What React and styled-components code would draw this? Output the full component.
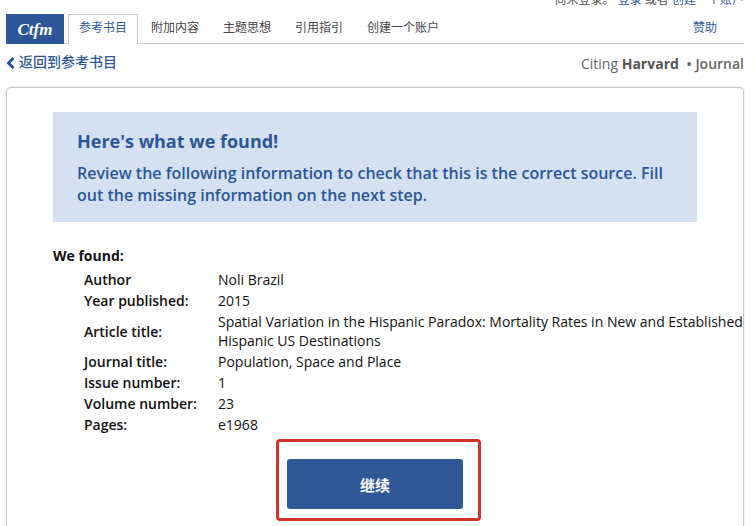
import React from 'react'
import styled, { createGlobalStyle } from 'styled-components'

const GlobalStyle = createGlobalStyle`
  * {
    box-sizing: border-box;
  }

  body {
    margin: 0;
    background: #fff;
    color: #111;
    font-family: "Open Sans", "Noto Sans CJK SC", sans-serif;
    font-size: 14px;
    line-height: 19px;
  }
`

const Page = styled.div`
  display: flex;
  flex-direction: column;
  min-height: 100vh;
  padding: 0 10px 0 6px;
`

const Account = styled.div`
  display: flex;
  align-items: flex-end;
  justify-content: flex-end;
  height: 6px;
  margin-bottom: 8px;
  overflow: hidden;
  color: #555;
  font-size: 12px;
  line-height: 12px;
  white-space: nowrap;
`

const TextLink = styled.a`
  color: #2e5a97;
  text-decoration: none;
`

const Nav = styled.nav`
  display: flex;
  height: 30px;
  border-bottom: 1px solid #c8c8c8;
  font-size: 12px;
`

const Logo = styled.a`
  display: flex;
  align-items: center;
  justify-content: center;
  width: 58px;
  height: 30px;
  margin-right: 4px;
  background: #2c5697;
  color: #fff;
  font-family: "Liberation Serif", serif;
  font-size: 17px;
  font-style: italic;
  font-weight: 700;
  text-decoration: none;
`

const Tab = styled.a`
  height: 30px;
  padding: 0 10px;
  border: 1px solid ${props => (props.$active ? '#c8c8c8' : 'transparent')};
  border-bottom: 0;
  background: ${props => (props.$active ? '#fff' : 'transparent')};
  color: ${props => (props.$blue ? '#2e5a97' : '#444')};
  line-height: 26px;
  margin-right: 2px;
  text-decoration: none;
`

const SponsorTab = styled(Tab)`
  margin-left: auto;
  margin-right: 16px;
`

const SubHeader = styled.div`
  display: flex;
  justify-content: space-between;
  height: 43px;
  padding-top: 8px;
`

const BackLink = styled(TextLink)`
  display: flex;
  gap: 4px;
  font-weight: 500;

  svg {
    margin-top: 5px;
  }
`

const Citing = styled.div`
  padding-top: 2px;
  color: #666;

  strong {
    margin-right: 4px;
    color: #555;
  }

  span {
    font-weight: 600;
  }
`

const Card = styled.main`
  flex: 1;
  padding: 24px 0 16px 46px;
  border: 1px solid #c8c8c8;
  border-bottom: 0;
  border-radius: 5px 5px 0 0;
  box-shadow: 0 0 3px #ddd;
`

const Notice = styled.section`
  margin-right: 46px;
  padding: 18px 24px 16px;
  background: #d5e0f1;
  color: #2c5697;
`

const NoticeTitle = styled.h1`
  margin: 0 0 10px;
  font-size: 18px;
  font-weight: 700;
  line-height: 22px;
`

const NoticeText = styled.p`
  margin: 0;
  font-size: 16px;
  font-weight: 600;
  line-height: 22px;
`

const FoundTitle = styled.h2`
  margin: 24px 0 3px;
  font-size: 14px;
  font-weight: 700;
  line-height: 19px;
`

const Details = styled.table`
  width: calc(100% - 27px);
  margin-left: 29px;
  border-spacing: 2px;

  th,
  td {
    padding: 0;
    text-align: left;
  }

  th {
    width: 132px;
    font-weight: 600;
  }
`

const Actions = styled.div`
  display: flex;
  justify-content: center;
  margin: 23px 46px 0 0;
`

const Highlight = styled.div`
  position: relative;

  &::after {
    content: '';
    position: absolute;
    inset: -20px -18px -12px -11px;
    border: 3px solid #d2322a;
    border-radius: 4px;
    pointer-events: none;
  }
`

const Button = styled.button`
  width: 176px;
  height: 50px;
  border: 0;
  border-radius: 3px;
  background: #2f5897;
  color: #fff;
  font-family: inherit;
  font-size: 15px;
  font-weight: 700;
`

const tabs = ['附加内容', '主题思想', '引用指引', '创建一个账户']

const details = [
  ['Author', 'Noli Brazil'],
  ['Year published:', '2015'],
  [
    'Article title:',
    'Spatial Variation in the Hispanic Paradox: Mortality Rates in New and Established Hispanic US Destinations',
  ],
  ['Journal title:', 'Population, Space and Place'],
  ['Issue number:', '1'],
  ['Volume number:', '23'],
  ['Pages:', 'e1968'],
]

const Header = () => (
  <header>
    <Account>
      <span>
        尚未登录。 <TextLink href="#login">登录</TextLink> 或者{' '}
        <TextLink href="#signup">创建一个账户</TextLink>
      </span>
    </Account>
    <Nav>
      <Logo href="#home">Ctfm</Logo>
      <Tab href="#bibliography" $active $blue>参考书目</Tab>
      {tabs.map(tab => (
        <Tab key={tab} href="#tab">{tab}</Tab>
      ))}
      <SponsorTab href="#sponsor" $blue>赞助</SponsorTab>
    </Nav>
    <SubHeader>
      <BackLink href="#bibliography">
        <svg width="9" height="12" viewBox="0 0 9 12" aria-hidden="true">
          <path d="M7.5 1 2.5 6l5 5" fill="none" stroke="#2c5697" strokeWidth="3" />
        </svg>
        返回到参考书目
      </BackLink>
      <Citing>
        Citing <strong>Harvard</strong> <span>• Journal</span>
      </Citing>
    </SubHeader>
  </header>
)

const App = () => (
  <>
    <GlobalStyle />
    <Page>
      <Header />
      <Card>
        <Notice>
          <NoticeTitle>Here's what we found!</NoticeTitle>
          <NoticeText>
            Review the following information to check that this is the correct
            source. Fill out the missing information on the next step.
          </NoticeText>
        </Notice>
        <FoundTitle>We found:</FoundTitle>
        <Details>
          <tbody>
            {details.map(([label, value]) => (
              <tr key={label}>
                <th scope="row">{label}</th>
                <td>{value}</td>
              </tr>
            ))}
          </tbody>
        </Details>
        <Actions>
          <Highlight>
            <Button type="button">继续</Button>
          </Highlight>
        </Actions>
      </Card>
    </Page>
  </>
)

export default App
